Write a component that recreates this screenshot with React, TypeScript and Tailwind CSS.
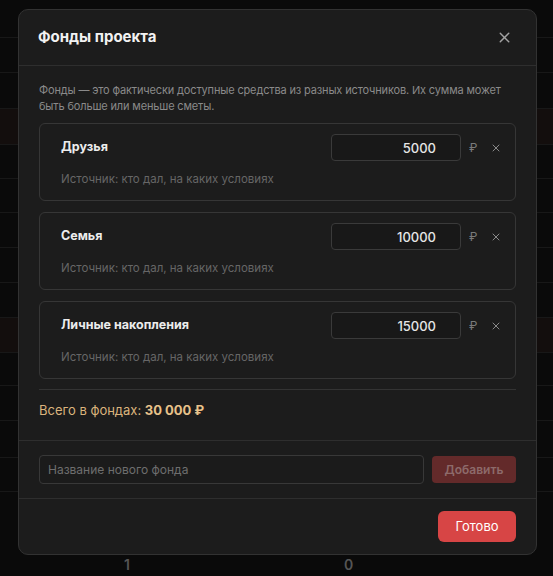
import React, { useState } from 'react';
import { X } from 'lucide-react';

interface Fund {
  id: string;
  name: string;
  amount: number;
}

const initialFunds: Fund[] = [
  { id: 'friends', name: 'Друзья', amount: 5000 },
  { id: 'family', name: 'Семья', amount: 10000 },
  { id: 'savings', name: 'Личные накопления', amount: 15000 },
];

// background table rows behind the overlay
const rows: { h: number; tint?: boolean }[] = [
  { h: 38 },
  { h: 35 },
  { h: 36 },
  { h: 36, tint: true },
  { h: 34 },
  { h: 34 },
  { h: 35 },
  { h: 35 },
  { h: 35 },
  { h: 35, tint: true },
  { h: 33 },
  { h: 35 },
  { h: 37 },
  { h: 34 },
];

const formatRub = (n: number) => n.toLocaleString('ru-RU').replace(/\u00a0/g, ' ');

function FundCard({ fund, onChange, onRemove }: { fund: Fund; onChange: (v: number) => void; onRemove: () => void }) {
  return (
    <div className="h-[78px] rounded-md border border-[#363636] pl-[21px] pr-[13px] pt-[10px]">
      <div className="flex h-[27px] items-center">
        <span className="flex-1 text-[12.5px] font-bold text-[#ececec]">{fund.name}</span>
        <input
          value={fund.amount}
          onChange={e => onChange(Number(e.target.value) || 0)}
          className="h-[27px] w-[130px] rounded-[4px] border border-[#3a3a3a] bg-[#181818] pr-6 text-right text-[13px] font-medium text-[#e6e6e6] outline-none"
        />
        <span className="ml-[8px] w-[10px] text-[12px] text-[#7a7a7a]">₽</span>
        <button onClick={onRemove} className="ml-[11px] text-[#8a8a8a]" aria-label="Удалить">
          <X size={12} strokeWidth={2} />
        </button>
      </div>
      <p className="mt-[10px] text-[11.5px] leading-4 text-[#666666]">Источник: кто дал, на каких условиях</p>
    </div>
  );
}

export default function App() {
  const [funds, setFunds] = useState<Fund[]>(initialFunds);
  const [newName, setNewName] = useState('');
  const total = funds.reduce((s, f) => s + f.amount, 0);

  return (
    <div className="relative h-[576px] w-[553px] overflow-hidden bg-[#0a0a0a] font-['Inter',sans-serif]">
      <div className="flex flex-col">
        {rows.map((r, i) => (
          <div
            key={i}
            style={{ height: r.h }}
            className={`border-b border-[#181818] ${r.tint ? 'bg-[#130e0d]' : ''}`}
          />
        ))}
        <div className="flex h-[84px] items-end pb-[1px] text-[14px] font-semibold text-[#555555]">
          <span className="ml-[124px]">1</span>
          <span className="ml-[214px]">0</span>
        </div>
      </div>

      <div className="absolute left-[18px] top-[9px] flex w-[519px] flex-col rounded-[10px] border border-[#323232] bg-[#1c1c1c]">
        <div className="flex h-[56px] items-center justify-between border-b border-[#2e2e2e] pl-[19px] pr-[23px]">
          <h2 className="text-[15px] font-bold text-[#f2f2f2]">Фонды проекта</h2>
          <button className="text-[#a3a3a3]" aria-label="Закрыть">
            <X size={17} strokeWidth={2} />
          </button>
        </div>

        <div className="border-b border-[#2e2e2e] px-[20px] pt-4 pb-[20px]">
          <p className="mb-[9px] text-[11px] leading-4 tracking-[-0.15px] text-[#8a8a8a]">
            Фонды — это фактически доступные средства из разных источников. Их сумма может быть больше или меньше сметы.
          </p>
          <div className="flex flex-col gap-[11px]">
            {funds.map(f => (
              <FundCard
                key={f.id}
                fund={f}
                onChange={v => setFunds(prev => prev.map(p => (p.id === f.id ? { ...p, amount: v } : p)))}
                onRemove={() => setFunds(prev => prev.filter(p => p.id !== f.id))}
              />
            ))}
          </div>
          <div className="mt-[10px] border-t border-[#333333] pt-[10px] text-[13px] leading-5 text-[#dbb47c]">
            Всего в фондах: <span className="font-bold text-[#e8c28a]">{formatRub(total)} ₽</span>
          </div>
        </div>

        <div className="flex items-center gap-2 border-b border-[#2e2e2e] px-[20px] pt-[14px] pb-[14px]">
          <input
            value={newName}
            onChange={e => setNewName(e.target.value)}
            placeholder="Название нового фонда"
            className="h-[29px] flex-1 rounded-[4px] border border-[#383838] bg-[#1b1b1b] pl-2 text-[12px] text-[#dddddd] outline-none placeholder:text-[#6e6e6e]"
          />
          <button className="h-[27px] w-[84px] rounded-[4px] bg-[#632a2a] text-[12px] font-semibold text-[#8d6a6a]">
            Добавить
          </button>
        </div>

        <div className="flex justify-end px-[20px] py-[12px]">
          <button className="h-[31px] w-[78px] rounded-[6px] bg-[#d74545] text-[13px] text-white">
            Готово
          </button>
        </div>
      </div>
    </div>
  );
}
